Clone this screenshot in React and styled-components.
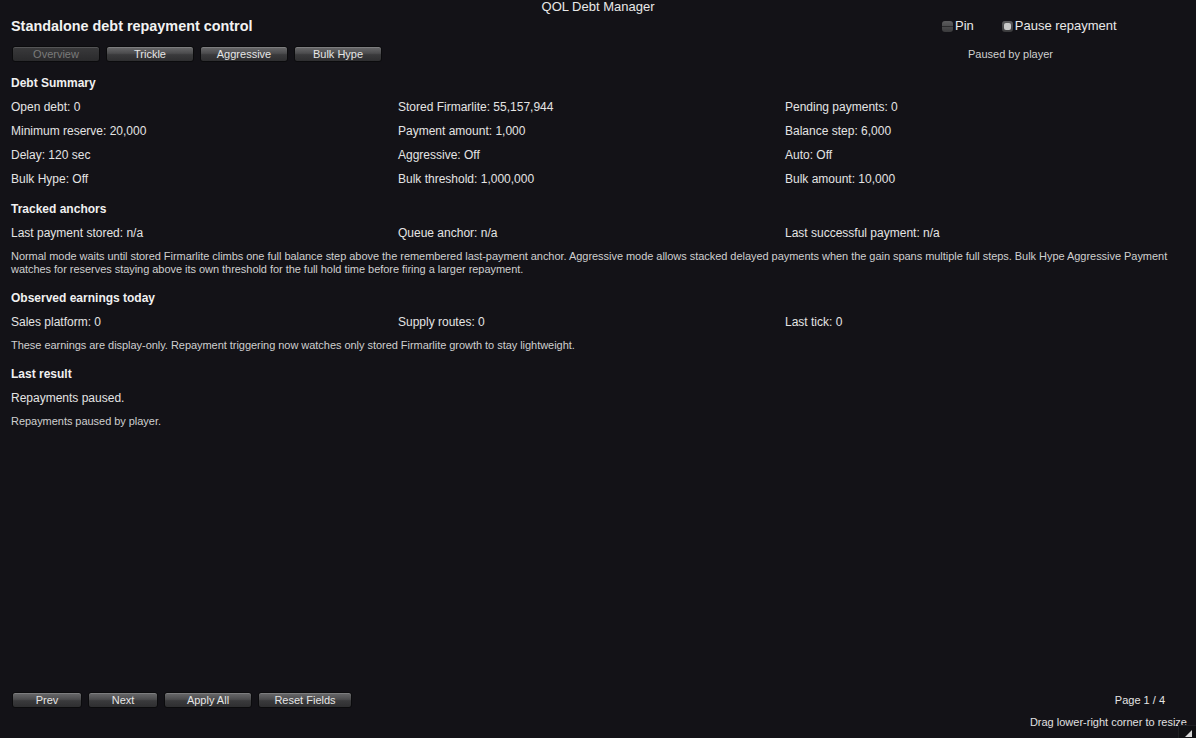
import React from 'react';
import styled, { createGlobalStyle } from 'styled-components';

const GlobalStyle = createGlobalStyle`
    html, body {
        margin: 0;
        padding: 0;
        background: #131217;
        overflow: hidden;
    }
    * { box-sizing: border-box; }
`

const Window = styled.div`
    position: relative;
    width: 1196px;
    height: 738px;
    display: flex;
    flex-direction: column;
    background: #131217;
    color: #e4e4e4;
    font-family: "Liberation Sans", Arial, sans-serif;
    overflow: hidden;
`

const TitleBar = styled.div`
    height: 12px;
    padding-top: 1px;
    line-height: 12px;
    font-size: 13px;
    text-align: center;
    color: #e8e8e8;
`

const Header = styled.div`
    display: grid;
    grid-template-columns: 1fr 243px;
    grid-template-rows: 20px 16px;
    row-gap: 10px;
    padding: 0 11px;
    margin-top: 4px;
`

const Title = styled.h1`
    margin: 0;
    font-size: 14.4px;
    line-height: 20px;
    font-weight: 700;
    color: #f2f2f2;
`

const Tabs = styled.div`
    display: flex;
    gap: 6px;
    padding-left: 1px;
`

const Button = styled.button`
    width: ${p => p.$w || 88}px;
    height: 16px;
    padding: 0;
    border: 1px solid #0b0b0d;
    border-radius: 3px;
    background: ${p => p.$disabled
        ? 'linear-gradient(#3a3a3c, #2a2a2c)'
        : 'linear-gradient(#6a6a6c 0%, #4c4c4e 45%, #3a3a3c 55%, #2e2e30 100%)'};
    box-shadow: inset 0 1px 0 rgba(255,255,255,0.14);
    color: ${p => p.$disabled ? '#7a7a7a' : '#e6e6e6'};
    font-family: "Liberation Sans", Arial, sans-serif;
    font-size: 11px;
    line-height: 14px;
    cursor: default;
`

const Toggles = styled.div`
    display: flex;
    align-items: center;
    font-size: 13px;
    line-height: 20px;
`

const Toggle = styled.label`
    display: flex;
    align-items: center;
    gap: 2px;
    margin-right: ${p => p.$mr || 0}px;
    color: #e8e8e8;
`

const Box = styled.span`
    position: relative;
    width: 11px;
    height: 11px;
    border-radius: 3px;
    background: linear-gradient(#5c5c5e, #3a3a3c);
    &::after {
        content: "";
        position: absolute;
        ${p => p.$checked
            ? `left: 2px; top: 2px; width: 7px; height: 7px; border-radius: 2px; background: #c8c8c8;`
            : `left: 0; right: 0; top: 5px; height: 1px; background: #2a2a2c;`}
    }
`

const Status = styled.div`
    padding-left: 26px;
    font-size: 11px;
    line-height: 16px;
    color: #cfcfcf;
`

const Content = styled.div`
    flex: 1;
    padding: 0 11px;
    margin-top: 9px;
`

const Section = styled.section`
    margin-bottom: ${p => p.$mb ?? 6}px;
`

const Heading = styled.h2`
    margin: 0;
    font-size: 12px;
    line-height: 24px;
    font-weight: 700;
    color: #f0f0f0;
`

const Grid = styled.div`
    display: grid;
    grid-template-columns: 387px 387px 1fr;
`

const Cell = styled.div`
    font-size: 12px;
    line-height: 24px;
    color: #e4e4e4;
    white-space: nowrap;
`

const Note = styled.p`
    margin: 4.5px 0 0;
    font-size: 11px;
    line-height: 13px;
    letter-spacing: -0.04px;
    color: #cfcfcf;
`

const Footer = styled.div`
    display: flex;
    justify-content: space-between;
    align-items: center;
    padding: 0 31px 0 12px;
`

const FooterButtons = styled.div`
    display: flex;
    gap: 6px;
`

const PageLabel = styled.div`
    font-size: 11px;
    color: #e4e4e4;
`

const Hint = styled.div`
    text-align: right;
    padding: 0 9px 0 0;
    margin-top: 6px;
    height: 24px;
    font-size: 11px;
    line-height: 16px;
    color: #e0e0e0;
    white-space: nowrap;
`

const Grip = styled.div`
    position: absolute;
    right: 0;
    bottom: 0;
    width: 18px;
    height: 13px;
    background: #0f0f12;
    border-top: 1px solid #1e1e22;
    border-left: 1px solid #1e1e22;
`

const summary = [
    'Open debt: 0', 'Stored Firmarlite: 55,157,944', 'Pending payments: 0',
    'Minimum reserve: 20,000', 'Payment amount: 1,000', 'Balance step: 6,000',
    'Delay: 120 sec', 'Aggressive: Off', 'Auto: Off',
    'Bulk Hype: Off', 'Bulk threshold: 1,000,000', 'Bulk amount: 10,000',
]

const anchors = ['Last payment stored: n/a', 'Queue anchor: n/a', 'Last successful payment: n/a']
const earnings = ['Sales platform: 0', 'Supply routes: 0', 'Last tick: 0']

const App = () => {
    return (
        <Window>
            <GlobalStyle />
            <TitleBar>QOL Debt Manager</TitleBar>
            <Header>
                <Title>Standalone debt repayment control</Title>
                <Toggles>
                    <Toggle $mr={28}><Box />Pin</Toggle>
                    <Toggle><Box $checked />Pause repayment</Toggle>
                </Toggles>
                <Tabs>
                    <Button $disabled>Overview</Button>
                    <Button>Trickle</Button>
                    <Button>Aggressive</Button>
                    <Button>Bulk Hype</Button>
                </Tabs>
                <Status>Paused by player</Status>
            </Header>

            <Content>
                <Section>
                    <Heading>Debt Summary</Heading>
                    <Grid>
                        {summary.map(s => <Cell key={s}>{s}</Cell>)}
                    </Grid>
                </Section>
                <Section $mb={10.5}>
                    <Heading>Tracked anchors</Heading>
                    <Grid>
                        {anchors.map(s => <Cell key={s}>{s}</Cell>)}
                    </Grid>
                    <Note>
                        Normal mode waits until stored Firmarlite climbs one full balance step above the remembered last-payment anchor. Aggressive mode allows stacked delayed payments when the gain spans multiple full steps. Bulk Hype Aggressive Payment watches for reserves staying above its own threshold for the full hold time before firing a larger repayment.
                    </Note>
                </Section>
                <Section $mb={10.5}>
                    <Heading>Observed earnings today</Heading>
                    <Grid>
                        {earnings.map(s => <Cell key={s}>{s}</Cell>)}
                    </Grid>
                    <Note>These earnings are display-only. Repayment triggering now watches only stored Firmarlite growth to stay lightweight.</Note>
                </Section>
                <Section>
                    <Heading>Last result</Heading>
                    <Cell>Repayments paused.</Cell>
                    <Note>Repayments paused by player.</Note>
                </Section>
            </Content>

            <Footer>
                <FooterButtons>
                    <Button $w={70}>Prev</Button>
                    <Button $w={70}>Next</Button>
                    <Button $w={88}>Apply All</Button>
                    <Button $w={94}>Reset Fields</Button>
                </FooterButtons>
                <PageLabel>Page 1 / 4</PageLabel>
            </Footer>
            <Hint>Drag lower-right corner to resize</Hint>
            <Grip>
                <svg width="18" height="13" viewBox="0 0 18 13">
                    <polygon points="13,3 13,10 6,10" fill="#d8d8d8" />
                </svg>
            </Grip>
        </Window>
    );
};

export default App;
